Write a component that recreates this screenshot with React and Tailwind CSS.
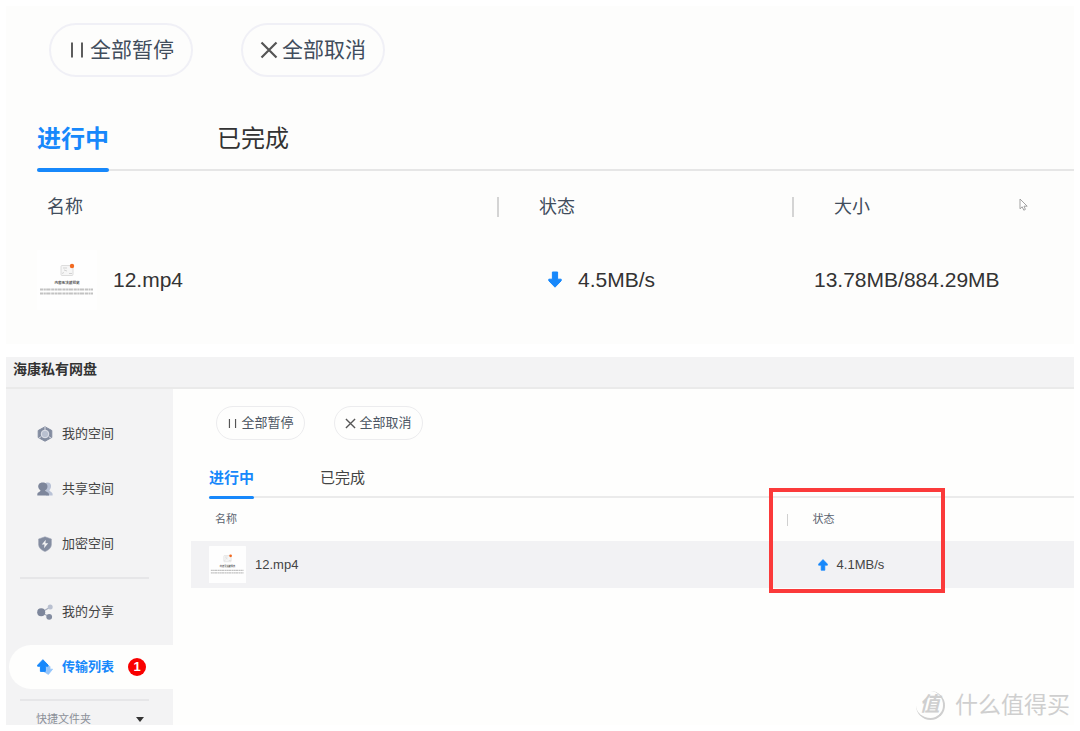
import React from 'react';

const PauseIcon = ({ className }) => (
  <svg viewBox="0 0 18 18" className={className} fill="none" stroke="#555" strokeWidth="1.9">
    <path d="M4 1.5V16.5M14 1.5V16.5" />
  </svg>
);

const CancelIcon = ({ className }) => (
  <svg viewBox="0 0 18 18" className={className} fill="none" stroke="#555" strokeWidth="2.2">
    <path d="M1.5 1.5L16.5 16.5M16.5 1.5L1.5 16.5" />
  </svg>
);

const ArrowIcon = ({ up = false, className }) => (
  <svg viewBox="0 0 14 17" className={className} fill="#1788fb" stroke="#1788fb" strokeWidth="1" strokeLinejoin="round">
    {up ? (
      <path d="M7 .8L13.2 7.2V8.8H9.6V16H4.4V8.8H.8V7.2Z" />
    ) : (
      <path d="M7 16.2L13.2 9.8V8.2H9.6V1H4.4V8.2H.8V9.8Z" />
    )}
  </svg>
);

const Thumbnail = ({ className }) => (
  <svg viewBox="0 0 60 60" className={className}>
    <rect width="60" height="60" rx="1" fill="#fefefe" />
    <rect x="24" y="15.5" width="12" height="10" rx="1" fill="#f6f6f6" stroke="#d6d6d6" strokeWidth=".8" />
    <path d="M26 18h4M27 20l3 1M25 23.5l2-1M32 23.5h3" stroke="#c4c4c4" strokeWidth=".7" />
    <circle cx="35" cy="16" r="2.2" fill="#f26a21" />
    <text x="30" y="34" textAnchor="middle" fontSize="3.6" fontWeight="700" fill="#555">内容无法被预览</text>
    <path d="M3 39.5H56M3 43.5H56" stroke="#c2c2c2" strokeWidth="2" strokeDasharray="3.2 .5 2.1 .4 4.3 .7" />
  </svg>
);

const SpaceIcon = () => (
  <svg viewBox="0 0 16 16" className="size-4">
    <path d="M8 .8L14.8 4.5V11.5L8 15.2L1.2 11.5V4.5Z" fill="#838ca0" stroke="#838ca0" strokeLinejoin="round" />
    <circle cx="8" cy="8" r="3.8" fill="#b9c0d0" stroke="#e6e8ee" strokeWidth=".9" />
    <path d="M8 .8V4M4.2 10.6L1.5 12.4M11.8 10.6L14.5 12.4" stroke="#e6e8ee" strokeWidth=".9" />
  </svg>
);

const ShareSpaceIcon = () => (
  <svg viewBox="0 0 16 16" className="size-4">
    <path d="M9 1.8C12.5.8 14.6 3 14 6C13.7 7.6 12.8 8.5 12.4 9.3C12.4 10.6 15.4 10.8 15.6 13V14.4H9Z" fill="#b9c2d6" />
    <path d="M5.8 1.4C9.4 1.4 10.8 3.7 10.4 6.3C10.1 7.8 9.2 8.7 8.4 9.6C8.4 11 11.8 11 12 13.3V14.6H.3V13.3C.6 11 3.5 11 3.5 9.6C2.6 8.7 1.6 7.8 1.3 6.3C.9 3.7 2.2 1.4 5.8 1.4Z" fill="#7d869b" />
  </svg>
);

const ShieldIcon = () => (
  <svg viewBox="0 0 16 16" className="size-4">
    <path d="M8 .8L14.4 3V8.2C14.4 11.8 11.6 14.2 8 15.5C4.4 14.2 1.6 11.8 1.6 8.2V3Z" fill="#838ca0" stroke="#9da5b6" strokeWidth=".6" strokeLinejoin="round" />
    <path d="M8.8 3.8L4.8 8.6H7.5L7 12.2L11.2 7.3H8.4Z" fill="#f3f3f4" />
  </svg>
);

const ShareIcon = () => (
  <svg viewBox="0 0 16 16" className="size-4">
    <path d="M4.5 8.2L13 3.2M4.5 8.2L12 12.8" stroke="#a5adbd" strokeWidth="1.2" />
    <circle cx="4.2" cy="8.2" r="4" fill="#7d869b" />
    <circle cx="13.2" cy="3.1" r="2.5" fill="#b9c0d0" />
    <circle cx="12.2" cy="12.8" r="2.9" fill="#838ca0" />
  </svg>
);

const TransferIcon = () => (
  <svg viewBox="0 0 16 16" className="size-4">
    <path d="M9.2 7.4H13V10.2H15.6L11.4 15.4L7.4 12.9H9.2Z" fill="#94c5fb" stroke="#94c5fb" strokeWidth=".8" strokeLinejoin="round" />
    <path d="M5.9 .7L11.2 6.2V7.2H8.4V12.4H3.4V7.2H.6V6.2Z" fill="#1788fb" stroke="#1788fb" strokeLinejoin="round" />
  </svg>
);

const navItems = [
  { label: '我的空间', icon: SpaceIcon },
  { label: '共享空间', icon: ShareSpaceIcon },
  { label: '加密空间', icon: ShieldIcon },
];

const NavLink = ({ label, icon: Icon }) => (
  <a href="#" className="flex h-[55px] items-center gap-[9px] pl-[31px] text-[13px] text-[#444]">
    <Icon />
    {label}
  </a>
);

const DownloadPanel = () => (
  <section className="h-[338px] bg-[#fdfdfc] pt-[17px] pl-[31px]">
    <div className="flex gap-12 pl-3">
      <button className="flex h-[54px] w-36 items-center justify-center gap-1 rounded-full border-2 border-[#f0f0f6] text-[21px] text-[#414d5c]">
        <PauseIcon className="size-[18px]" />
        全部暂停
      </button>
      <button className="flex h-[54px] w-36 items-center justify-center gap-1 rounded-full border-2 border-[#f0f0f6] text-[21px] text-[#414d5c]">
        <CancelIcon className="size-[18px]" />
        全部取消
      </button>
    </div>
    <div role="tablist" className="mt-11 flex h-[50px] gap-[108px] border-b-2 border-[#e6e6e6] text-2xl leading-9">
      <button role="tab" aria-selected="true" className="flex h-[51px] flex-col justify-between font-bold text-[#1788fb]">
        进行中
        <span className="h-1 w-full rounded-full bg-[#1788fb]" />
      </button>
      <button role="tab" aria-selected="false" className="flex text-[#333]">已完成</button>
    </div>
    <table className="w-full table-fixed text-left text-[#333]">
      <thead className="text-lg text-[#414d5c]">
        <tr className="h-[71px]">
          <th className="w-[460px] pl-[10px] font-normal">名称</th>
          <th className="w-[295px] font-normal">
            <div className="flex items-center gap-10"><span className="h-5 w-[2px] bg-[#d4d4d4]" />状态</div>
          </th>
          <th className="font-normal">
            <div className="flex items-center gap-10"><span className="h-5 w-[2px] bg-[#d4d4d4]" />大小</div>
          </th>
        </tr>
      </thead>
      <tbody className="text-[21px]">
        <tr className="h-[75px]">
          <td>
            <div className="flex items-center gap-4"><Thumbnail className="size-[60px]" />12.mp4</div>
          </td>
          <td>
            <div className="flex items-center gap-4 pl-[51px]"><ArrowIcon className="h-[17px] w-[14px]" />4.5MB/s</div>
          </td>
          <td className="pl-[22px]">13.78MB/884.29MB</td>
        </tr>
      </tbody>
    </table>
    <svg viewBox="0 0 9 13" className="absolute top-[198px] right-[52px] h-[13px] w-[9px]">
      <path d="M1 1V10.8L3.2 8.8L4.8 12.2L6.4 11.4L5 8.2H8.2Z" fill="#fff" stroke="#999" strokeWidth=".9" />
    </svg>
  </section>
);

const Sidebar = () => (
  <nav className="w-[167px] shrink-0 overflow-hidden bg-[#f3f3f4] pt-[17px]">
    {navItems.map((item) => (
      <NavLink key={item.label} {...item} />
    ))}
    <hr className="mt-[6px] mr-6 ml-[14px] border-t-2 border-[#e6e6e8]" />
    <div className="pt-[5px]">
      <NavLink label="我的分享" icon={ShareIcon} />
    </div>
    <a href="#" className="mt-[6px] ml-[3px] flex h-11 items-center gap-[9px] rounded-l-full bg-[#fefefd] pl-7 text-[13px] font-bold text-[#1788fb]">
      <TransferIcon />
      传输列表
      <span className="ml-[5px] flex size-[18px] items-center justify-center rounded-full bg-[#f90000] text-[13px] text-white">1</span>
    </a>
    <hr className="mt-[10px] mr-6 ml-[14px] border-t-2 border-[#e6e6e8]" />
    <button className="flex w-full items-center justify-between pt-[10px] pr-[29px] pl-[30px] text-[11px] text-[#8b8f98]">
      快捷文件夹
      <svg viewBox="0 0 8 5" className="h-[5px] w-2"><path d="M0 0H8L4 5Z" fill="#333" /></svg>
    </button>
  </nav>
);

const UploadPanel = () => (
  <section className="relative mt-[13px] flex h-[368px] flex-col overflow-hidden bg-[#fefefd]">
    <header className="h-8 shrink-0 border-b-2 border-[#eaeaea] bg-[#f3f3f4] pl-[7px] text-sm leading-6 font-bold text-[#333]">
      海康私有网盘
    </header>
    <div className="flex min-h-0 flex-1">
      <Sidebar />
      <main className="min-w-0 flex-1 pt-[17px] pl-[18px]">
        <div className="flex gap-[29px] pl-[25px]">
          <button className="flex h-[34px] w-[89px] items-center justify-center gap-[3px] rounded-full border border-[#ececee] text-[13px] text-[#4d5663]">
            <PauseIcon className="size-[11px]" />
            全部暂停
          </button>
          <button className="flex h-[34px] w-[89px] items-center justify-center gap-[3px] rounded-full border border-[#ececee] text-[13px] text-[#4d5663]">
            <CancelIcon className="size-[11px]" />
            全部取消
          </button>
        </div>
        <div role="tablist" className="mt-[27px] ml-[18px] flex h-[31px] gap-[66px] border-b-2 border-[#ebebeb] text-[15px] leading-[22px]">
          <button role="tab" aria-selected="true" className="flex h-8 flex-col justify-between font-bold text-[#1788fb]">
            进行中
            <span className="h-[3px] w-full rounded-full bg-[#1788fb]" />
          </button>
          <button role="tab" aria-selected="false" className="flex text-[#444]">已完成</button>
        </div>
        <table className="w-full table-fixed text-left text-[#444]">
          <thead className="text-[11px] text-[#5b6470]">
            <tr className="h-[43px]">
              <th className="w-[67%] pl-6 font-normal">名称</th>
              <th className="font-normal">
                <div className="flex items-center gap-[25px] pl-1"><span className="h-3 w-px bg-[#d0d0d0]" />状态</div>
              </th>
            </tr>
          </thead>
          <tbody className="text-[13px]">
            <tr className="h-[47px] bg-[#f2f2f4]">
              <td className="pl-[18px]">
                <div className="flex items-center gap-[9px]"><Thumbnail className="size-[37px]" />12.mp4</div>
              </td>
              <td>
                <div className="flex items-center gap-[9px] pl-[35px]"><ArrowIcon up className="h-3 w-[10px]" />4.1MB/s</div>
              </td>
            </tr>
          </tbody>
        </table>
      </main>
    </div>
    <div className="pointer-events-none absolute top-[131px] right-[129px] h-[105px] w-[176px] border-4 border-[#fb3a3a]" />
    <div className="absolute right-1 bottom-1 flex items-center gap-[10px] text-[23px] leading-8 text-[#cfcfcf]">
      <span className="flex size-[29px] items-center justify-center rounded-full border-r-2 border-b-2 border-[#cfcfcf] text-xl font-bold italic">值</span>
      什么值得买
    </div>
  </section>
);

const App = () => (
  <div className="relative bg-white p-[6px] font-['Liberation_Sans','Noto_Sans_CJK_SC',sans-serif]">
    <DownloadPanel />
    <UploadPanel />
  </div>
);

export default App;
